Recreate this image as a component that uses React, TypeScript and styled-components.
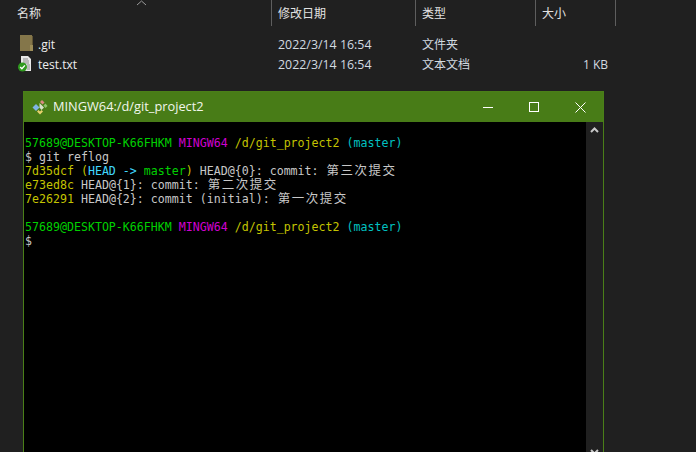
import React from 'react';
import styled, { createGlobalStyle } from 'styled-components';

const GlobalStyle = createGlobalStyle`
  html, body {
    margin: 0;
    padding: 0;
    width: 696px;
    height: 452px;
    overflow: hidden;
    background: #202020;
  }
`;

const Page = styled.div`
  width: 696px;
  height: 452px;
  overflow: hidden;
  font-family: 'Noto Sans CJK SC', 'Liberation Sans', sans-serif;
`;

const Header = styled.div`
  display: grid;
  grid-template-columns: 272px 144px 120px 80px;
  height: 26px;
`;

const HeaderCell = styled.div`
  position: relative;
  display: flex;
  align-items: center;
  padding: 0 0 1px ${(p) => p.$pad}px;
  border-right: 1px solid #5e5e5e;
  font-size: 12px;
  color: #e2e2e2;
  box-sizing: border-box;
`;

const SortCaret = styled.svg`
  position: absolute;
  left: 136px;
  top: 0;
`;

const FileList = styled.div`
  padding-top: 8px;
  height: 57px;
`;

const FileRow = styled.div`
  display: grid;
  grid-template-columns: 272px 144px 120px 72px;
  height: 20px;
  align-items: center;
  font-size: 12px;
  color: #d2dae0;
`;

const NameCell = styled.div`
  display: flex;
  align-items: center;
  padding-left: 18px;
  gap: 4px;
  color: #eeeeee;
  font-family: 'Open Sans', 'Noto Sans', sans-serif;
  font-size: 12px;
`;

const DateCell = styled.div`
  padding-left: 6px;
  font-family: 'Open Sans', 'Noto Sans', sans-serif;
  font-size: 12.4px;
`;

const TypeCell = styled.div`
  padding: 0 0 2px 6px;
`;

const SizeCell = styled.div`
  text-align: right;
  font-family: 'Open Sans', 'Noto Sans', sans-serif;
`;

const Terminal = styled.div`
  margin-left: 23px;
  width: 581px;
  height: 369px;
  box-sizing: border-box;
  border: 1px solid #4a7f18;
  border-bottom: 0;
  background: #202020;
  display: flex;
  flex-direction: column;
`;

const TitleBar = styled.div`
  height: 30px;
  flex: none;
  background: #487c17;
  display: flex;
  align-items: center;
  padding-left: 8px;
  color: #f2f6ec;
  font-family: 'Open Sans', 'Noto Sans', sans-serif;
  font-size: 12.8px;
`;

const TitleText = styled.span`
  margin: 0 0 3px 5px;
  flex: 1;
`;

const WindowButton = styled.div`
  width: 46px;
  height: 30px;
  display: flex;
  align-items: center;
  justify-content: center;
`;

const Body = styled.div`
  flex: 1;
  display: flex;
  min-height: 0;
`;

const Console = styled.div`
  flex: 1;
  background: #000;
  padding: 14px 0 0 1px;
  font-family: 'DejaVu Sans Mono', 'Noto Sans CJK SC', monospace;
  font-size: 11.62px;
  line-height: 14px;
  color: #c8c8c8;
  white-space: pre;
`;

const Line = styled.div`
  height: 14px;
`;

// falls through to the CJK family, the mono font has no such glyphs
const Cjk = styled.span`
  margin-left: 1px;
  font-size: 12.5px;
  letter-spacing: 1.5px;
`;

const Ansi = styled.span`
  color: ${(p) => p.$c};
`;

const ScrollBar = styled.div`
  width: 17px;
  flex: none;
  background: #202020;
  display: flex;
  flex-direction: column;
  align-items: center;
  justify-content: space-between;
  padding: 5px 0;
  box-sizing: border-box;
`;

const GREEN = '#00d000';
const MAGENTA = '#d000d0';
const YELLOW = '#c4c400';
const CYAN = '#00c0c0';

const Prompt = () => (
  <Line>
    <Ansi $c={GREEN}>57689@DESKTOP-K66FHKM </Ansi>
    <Ansi $c={MAGENTA}>MINGW64 </Ansi>
    <Ansi $c={YELLOW}>/d/git_project2 </Ansi>
    <Ansi $c={CYAN}>(master)</Ansi>
  </Line>
);

const FolderIcon = () => (
  <svg width="16" height="20" viewBox="0 0 16 20">
    <rect x="2" y="1" width="12" height="16" fill="#84764a" />
    <rect x="14" y="2" width="1" height="15" fill="#5f5434" />
    <rect x="12" y="11" width="3" height="6" fill="#9c8c58" />
  </svg>
);

const TextFileIcon = () => (
  <svg width="16" height="20" viewBox="0 0 16 20">
    <path d="M3 2h7l3 3v12H3z" fill="#e8e8e8" />
    <path d="M5 5h5M5 7h6M5 9h6M9 11h3M9 13h3M9 15h3" stroke="#8a8a8a" strokeWidth="1" />
    <circle cx="4.5" cy="13" r="4.5" fill="#2f9a1e" />
    <path d="M2.2 13l1.7 1.8 3-3.4" fill="none" stroke="#fff" strokeWidth="1.4" />
  </svg>
);

const GitIcon = () => (
  <svg width="16" height="16" viewBox="0 0 16 16">
    <path d="M8 3l2-2 2.5 2.5-2 2z" fill="#d98a80" />
    <path d="M11.5 6.500l2-2 2 2.500-2 2z" fill="#8ec56b" />
    <path d="M4 5l3.500 3.500-3.500 3.500-3.500-3.500z" fill="#7fb4e6" />
    <path d="M5 12.500l3 3 3-3-1.500-1.500-1.500 1.500-1.500-1.500z" fill="#e8d26e" />
    <path d="M7.500 4l4.500 4.500-2.500 2.500-2-2.500z" fill="#f0f4ea" opacity="0.85" />
  </svg>
);

const files = [
  { name: '.git', type: '文件夹', size: '', Icon: FolderIcon },
  { name: 'test.txt', type: '文本文档', size: '1 KB', Icon: TextFileIcon },
];

export default function App() {
  return (
    <Page>
      <GlobalStyle />
      <Header>
        <HeaderCell $pad={17}>
          名称
          <SortCaret width="11" height="6" viewBox="0 0 11 6">
            <path d="M1 5l4.500-4L10 5" fill="none" stroke="#9a9a9a" strokeWidth="1" />
          </SortCaret>
        </HeaderCell>
        <HeaderCell $pad={6}>修改日期</HeaderCell>
        <HeaderCell $pad={6}>类型</HeaderCell>
        <HeaderCell $pad={6}>大小</HeaderCell>
      </Header>
      <FileList>
        {files.map(({ name, type, size, Icon }) => (
          <FileRow key={name}>
            <NameCell>
              <Icon />
              {name}
            </NameCell>
            <DateCell>2022/3/14 16:54</DateCell>
            <TypeCell>{type}</TypeCell>
            <SizeCell>{size}</SizeCell>
          </FileRow>
        ))}
      </FileList>
      <Terminal>
        <TitleBar>
          <GitIcon />
          <TitleText>MINGW64:/d/git_project2</TitleText>
          <WindowButton>
            <svg width="10" height="10" viewBox="0 0 10 10">
              <path d="M0 5.500h10" stroke="#fff" strokeWidth="1" />
            </svg>
          </WindowButton>
          <WindowButton>
            <svg width="10" height="10" viewBox="0 0 10 10">
              <rect x="0.5" y="0.5" width="9" height="9" fill="none" stroke="#fff" strokeWidth="1" />
            </svg>
          </WindowButton>
          <WindowButton>
            <svg width="11" height="11" viewBox="0 0 11 11">
              <path d="M0.5 0.5l10 10M10.500 0.5l-10 10" stroke="#fff" strokeWidth="1" />
            </svg>
          </WindowButton>
        </TitleBar>
        <Body>
          <Console>
            <Prompt />
            <Line>$ git reflog</Line>
            <Line>
              <Ansi $c={YELLOW}>7d35dcf (</Ansi>
              <Ansi $c="#40d8ff">HEAD -&gt; </Ansi>
              <Ansi $c={GREEN}>master</Ansi>
              <Ansi $c={YELLOW}>)</Ansi> HEAD@{'{0}'}: commit: <Cjk>第三次提交</Cjk>
            </Line>
            <Line>
              <Ansi $c={YELLOW}>e73ed8c</Ansi> HEAD@{'{1}'}: commit: <Cjk>第二次提交</Cjk>
            </Line>
            <Line>
              <Ansi $c={YELLOW}>7e26291</Ansi> HEAD@{'{2}'}: commit (initial): <Cjk>第一次提交</Cjk>
            </Line>
            <Line />
            <Prompt />
            <Line>$</Line>
          </Console>
          <ScrollBar>
            <svg width="9" height="6" viewBox="0 0 9 6">
              <path d="M1 5l3.500-3.500L8 5" fill="none" stroke="#c8c8c8" strokeWidth="2" />
            </svg>
            <svg width="9" height="6" viewBox="0 0 9 6">
              <path d="M1 1l3.500 3.500L8 1" fill="none" stroke="#c8c8c8" strokeWidth="2" />
            </svg>
          </ScrollBar>
        </Body>
      </Terminal>
    </Page>
  );
}
